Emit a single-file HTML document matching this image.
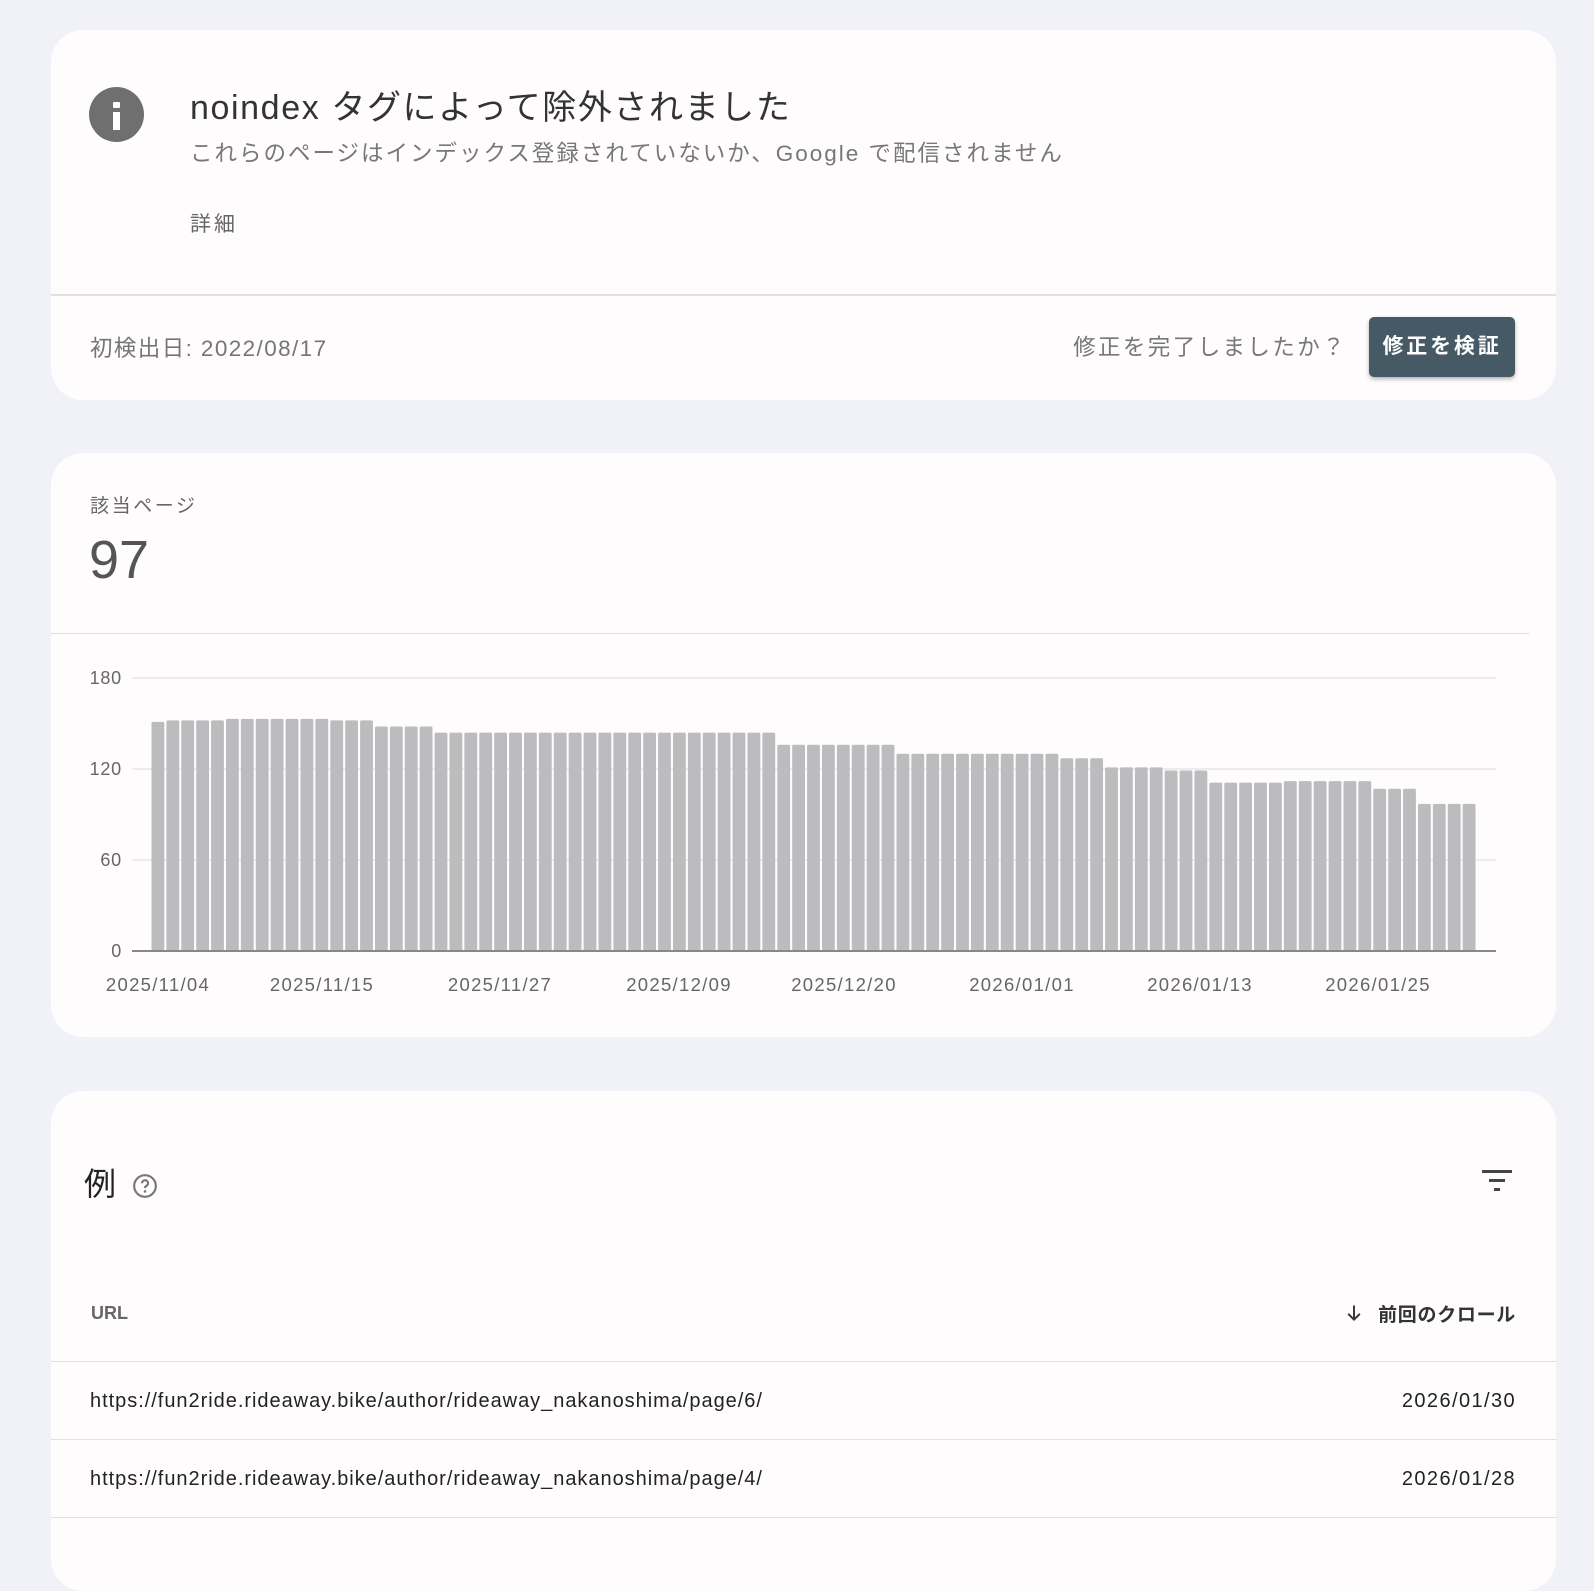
<!DOCTYPE html>
<html><head><meta charset="utf-8">
<style>
*{margin:0;padding:0;box-sizing:border-box}
body{width:1594px;height:1520px;background:#f0f2f8;font-family:"Liberation Sans","Noto Sans CJK JP",sans-serif;position:relative;overflow:hidden}
.card{position:absolute;left:51px;width:1505px;background:#fffcfe;border-radius:32px}
.a{position:absolute;white-space:nowrap}
</style></head><body>
<div class="card" style="top:30px;height:370px">
  <div class="a" style="left:38px;top:57px;width:55px;height:55px;border-radius:50%;background:#6f6f6f"></div>
  <div class="a" style="left:62px;top:72px;width:7px;height:6px;background:#fff;border-radius:1px"></div>
  <div class="a" style="left:62px;top:82px;width:7px;height:18px;background:#fff"></div>
  <div class="a" style="left:139px;top:50px;font-size:34px;letter-spacing:1.6px;color:#333">noindex タグによって除外されました</div>
  <div class="a" style="left:139px;top:106px;font-size:22.5px;letter-spacing:2px;color:#777">これらのページはインデックス登録されていないか、Google で配信されません</div>
  <div class="a" style="left:139px;top:178px;font-size:21px;letter-spacing:3px;color:#666">詳細</div>
  <div class="a" style="left:0;top:264px;width:1505px;height:2px;background:#e0e0e0"></div>
  <div class="a" style="left:39px;top:301px;font-size:22.5px;letter-spacing:1.4px;color:#757575">初検出日: 2022/08/17</div>
  <div class="a" style="right:209px;top:300px;font-size:22.5px;letter-spacing:2.4px;color:#777">修正を完了しましたか？</div>
  <div class="a" style="left:1318px;top:287px;width:146px;height:60px;background:#455a64;border-radius:5px;box-shadow:0 2px 4px rgba(0,0,0,.3);color:#fff;font-weight:bold;font-size:21px;letter-spacing:2.8px;line-height:60px;text-align:center">修正を検証</div>
</div>

<div class="card" style="top:453px;height:584px">
  <div class="a" style="left:39px;top:38px;font-size:19px;letter-spacing:2.6px;color:#666">該当ページ</div>
  <div class="a" style="left:38px;top:76px;font-size:54px;color:#555">97</div>
  <div class="a" style="left:0;top:180px;width:1478px;height:1px;background:#ddd"></div>
</div>
<svg class="a" style="left:0;top:0" width="1594" height="1040" font-family="Liberation Sans, sans-serif" font-size="18" fill="#666">
  <g stroke="#e6e6e6" stroke-width="1.5">
    <line x1="132" x2="1496" y1="678" y2="678"/><line x1="132" x2="1496" y1="769" y2="769"/><line x1="132" x2="1496" y1="860" y2="860"/>
  </g>
  <g text-anchor="end" letter-spacing="0.8"><text x="122" y="684">180</text><text x="122" y="775">120</text><text x="122" y="866">60</text><text x="122" y="957">0</text></g>
  <g id="bars" fill="#bcbbbd"></g>
  <line x1="132" x2="1496" y1="951" y2="951" stroke="#888" stroke-width="2"/>
  <g text-anchor="middle" font-size="18.5" letter-spacing="1.3"><text x="158" y="991">2025/11/04</text><text x="322" y="991">2025/11/15</text><text x="500" y="991">2025/11/27</text><text x="679" y="991">2025/12/09</text><text x="844" y="991">2025/12/20</text><text x="1022" y="991">2026/01/01</text><text x="1200" y="991">2026/01/13</text><text x="1378" y="991">2026/01/25</text></g>
</svg>

<div class="card" style="top:1091px;height:500px">
  <div class="a" style="left:33px;top:68px;font-size:32px;color:#222">例</div>
  <svg class="a" style="left:81px;top:82px" width="26" height="26" viewBox="0 0 24 24"><circle cx="12" cy="12" r="10" fill="none" stroke="#777" stroke-width="2"/><path d="M9.2 9.5a2.8 2.8 0 1 1 4 2.5c-.9.5-1.2 1-1.2 2" fill="none" stroke="#777" stroke-width="2"/><circle cx="12" cy="17" r="1.2" fill="#777"/></svg>
  <div class="a" style="left:1431px;top:79px;width:30px;height:3px;background:#444"></div>
  <div class="a" style="left:1438px;top:88px;width:16px;height:3px;background:#444"></div>
  <div class="a" style="left:1443px;top:97px;width:6px;height:3px;background:#444"></div>
  <div class="a" style="left:40px;top:212px;font-size:18px;font-weight:bold;color:#666">URL</div>
  <svg class="a" style="left:1293px;top:212px" width="20" height="20" viewBox="0 0 24 24"><path d="M12 3v17M5 13l7 7 7-7" fill="none" stroke="#333" stroke-width="2.3"/></svg>
  <div class="a" style="right:40px;top:209px;font-size:19px;letter-spacing:0.7px;font-weight:bold;color:#333">前回のクロール</div>
  <div class="a" style="left:0;top:270px;width:1505px;height:1px;background:#e0e0e0"></div>
  <div class="a" style="left:39px;top:299px;font-size:20px;letter-spacing:0.97px;color:#222">https://fun2ride.rideaway.bike/author/rideaway_nakanoshima/page/6/</div>
  <div class="a" style="right:40px;top:299px;font-size:20px;letter-spacing:1.4px;color:#222">2026/01/30</div>
  <div class="a" style="left:0;top:348px;width:1505px;height:1px;background:#e0e0e0"></div>
  <div class="a" style="left:39px;top:377px;font-size:20px;letter-spacing:0.97px;color:#222">https://fun2ride.rideaway.bike/author/rideaway_nakanoshima/page/4/</div>
  <div class="a" style="right:40px;top:377px;font-size:20px;letter-spacing:1.4px;color:#222">2026/01/28</div>
  <div class="a" style="left:0;top:426px;width:1505px;height:1px;background:#e0e0e0"></div>
</div>
<script>
var groups=[[1,151],[4,152],[7,153],[3,152],[4,148],[23,144],[8,136],[11,130],[3,127],[4,121],[3,119],[5,111],[6,112],[3,107],[4,97]];
var s='',i=0;
groups.forEach(function(g){for(var k=0;k<g[0];k++){var x=151.5+i*14.9,h=g[1]*1.517;s+='<rect x="'+x.toFixed(1)+'" y="'+(951-h).toFixed(1)+'" width="12.8" height="'+h.toFixed(1)+'" rx="1.5"/>';i++;}});
document.getElementById('bars').innerHTML=s;
</script>
</body></html>
